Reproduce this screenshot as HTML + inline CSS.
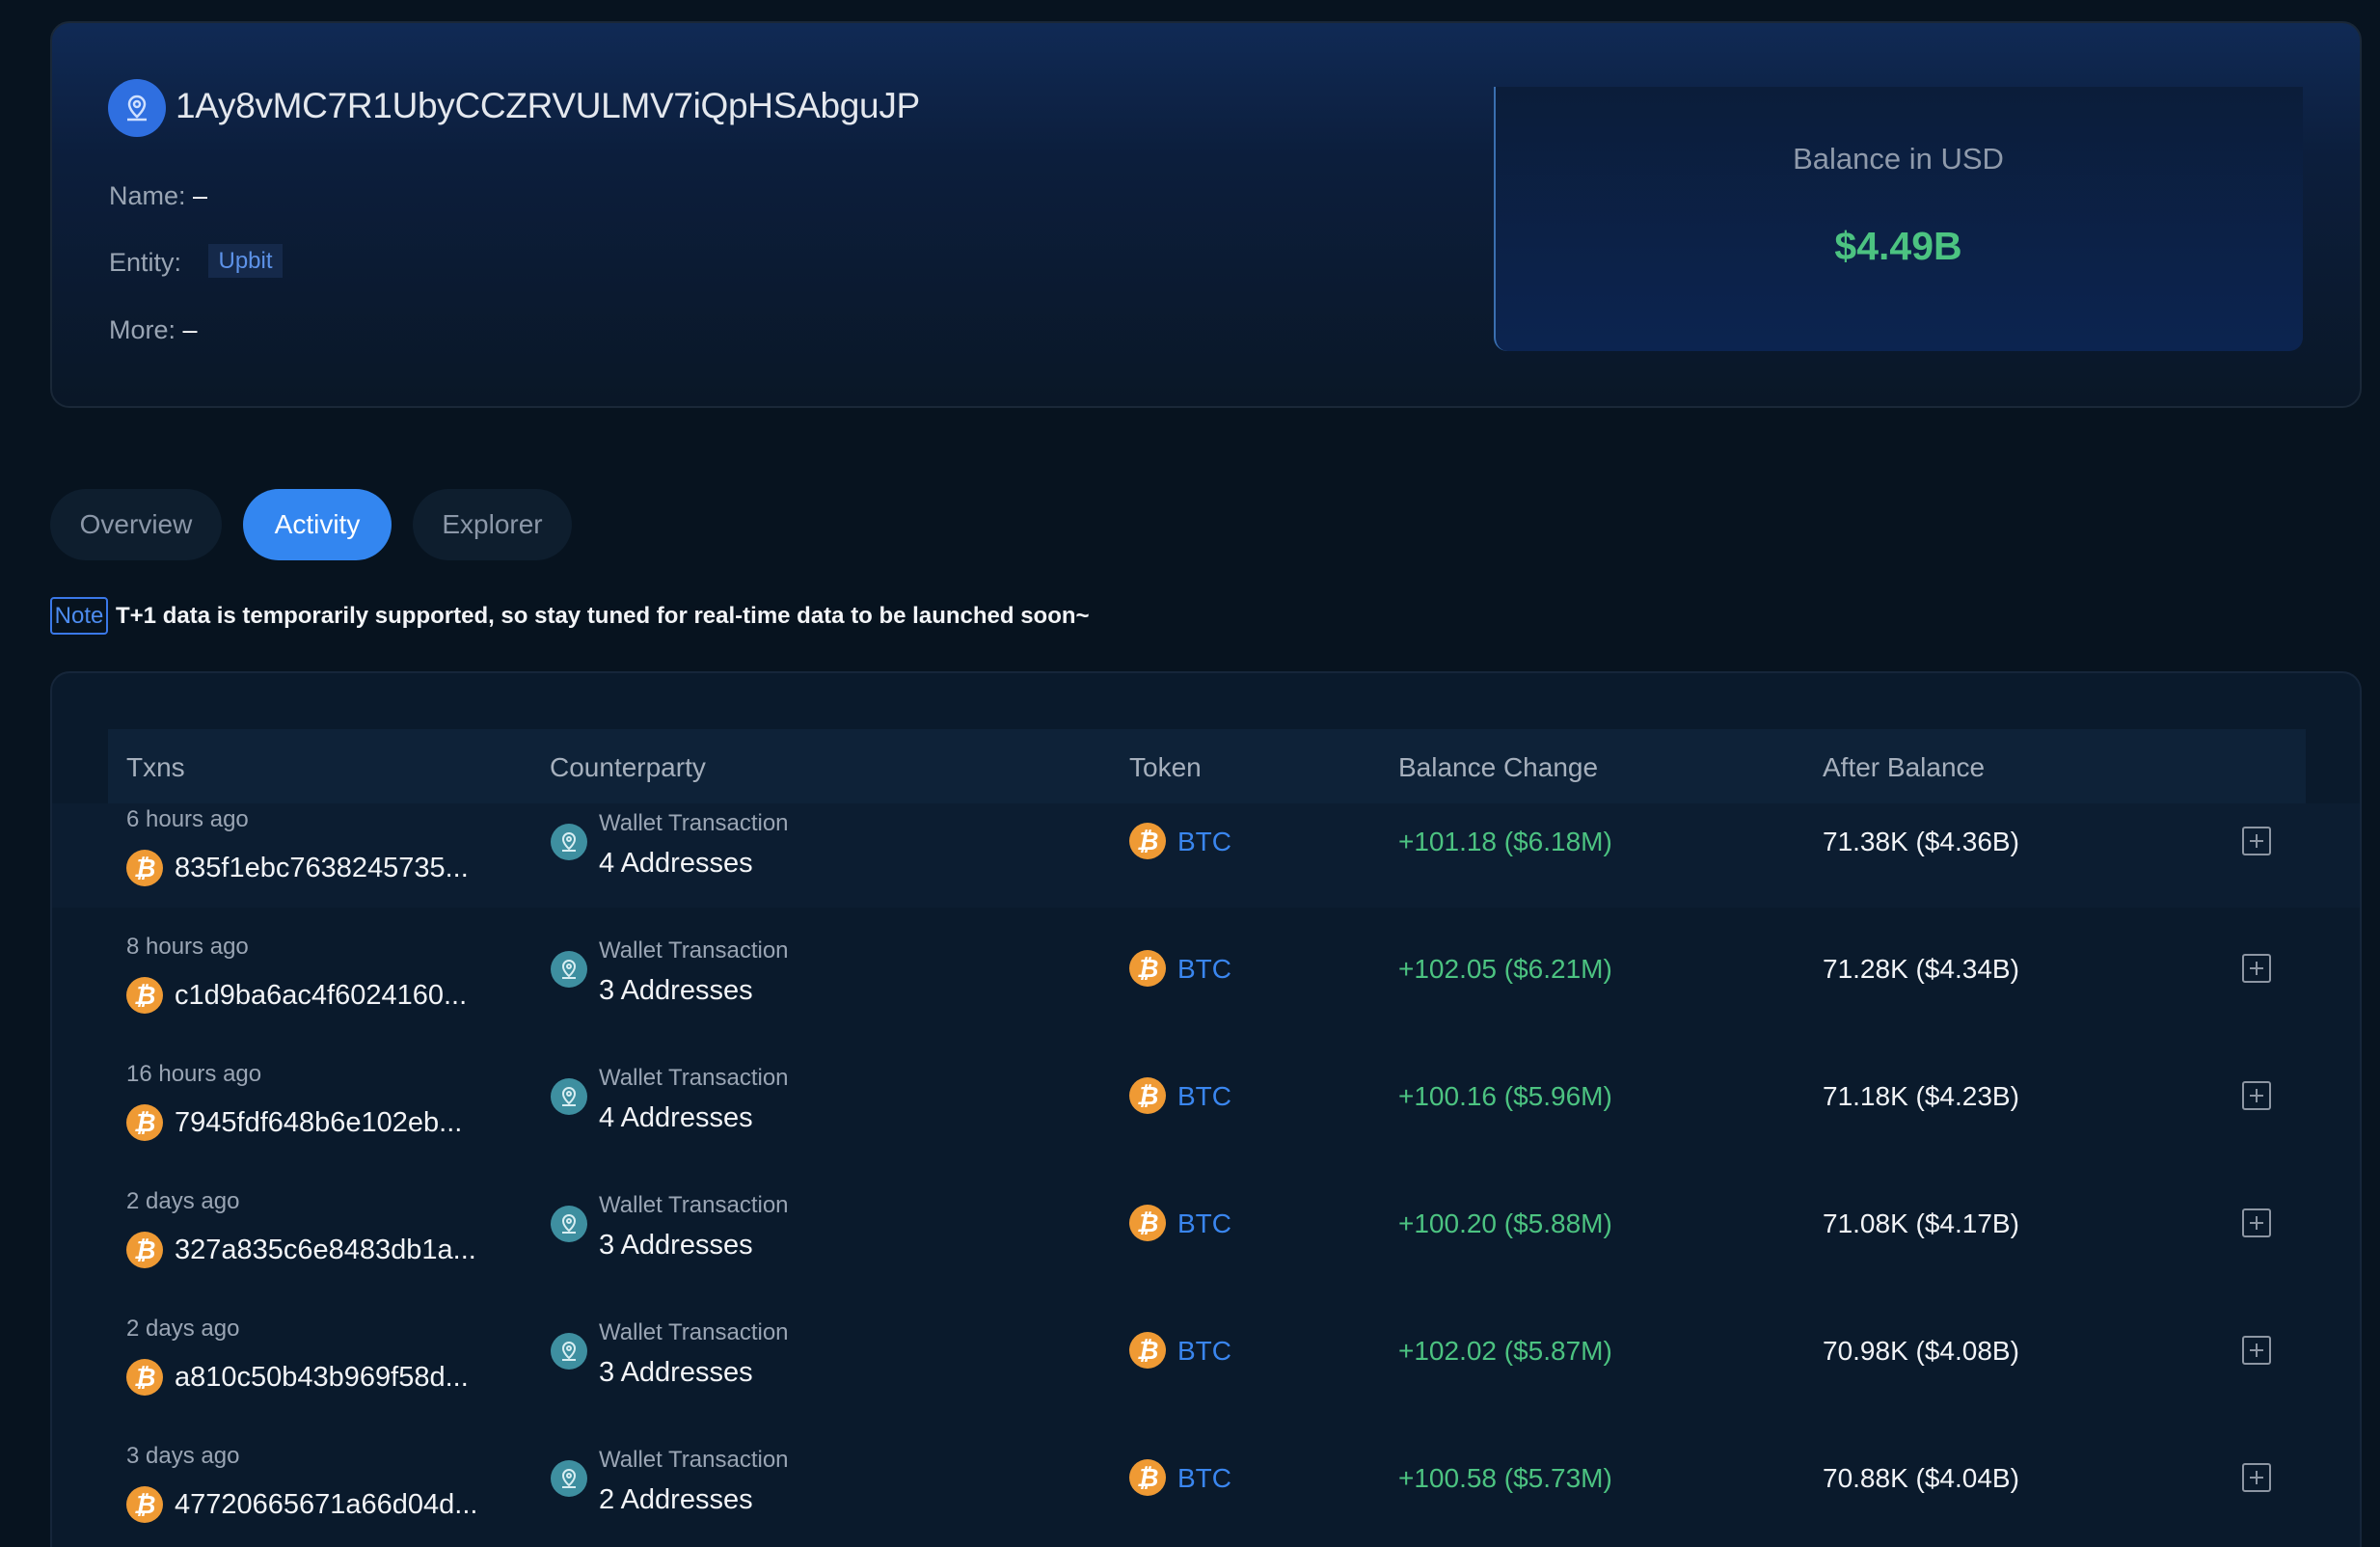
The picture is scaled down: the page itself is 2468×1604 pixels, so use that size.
<!DOCTYPE html>
<html style="width:2468px;height:1604px;overflow:hidden"><head><meta charset="utf-8"><style>
*{margin:0;padding:0;box-sizing:border-box}
body{width:2468px;height:1604px;background:#07131f;font-family:"Liberation Sans",sans-serif;position:relative;overflow:hidden;color:#fff}
.abs{position:absolute}
.card1{left:52px;top:22px;width:2397px;height:401px;border-radius:20px;border:2px solid #1a2838;background:linear-gradient(180deg,#102a55 0%,#0c1e3c 35%,#0a1727 100%)}
.bal{left:1549px;top:90px;width:839px;height:274px;border-radius:0 0 14px 14px;background:linear-gradient(180deg,#0b1d3a 0%,#0c2450 100%);border-left:2px solid #3a6fb0}
.lbl{font-size:27px;color:#9aa5b4}
.tab{top:507px;height:74px;border-radius:37px;font-size:28px;line-height:74px;text-align:center;color:#8b97a8;background:#0e1e2e}
.card2{left:52px;top:696px;width:2397px;height:908px;border-radius:20px 20px 0 0;border:2px solid #16263a;border-bottom:none;background:#0a1a2c}
.hdr{left:112px;top:756px;width:2279px;height:77px;background:#0e2238}
.hdr span{position:absolute;top:24px;font-size:28px;color:#a6b0bd}
.btc{position:absolute;width:38px;height:38px;border-radius:50%;background:#ef9a34;color:#fff;font-size:26px;font-weight:bold;text-align:center;line-height:38px;font-style:italic}
.cp{position:absolute;width:38px;height:38px;border-radius:50%;background:#3e8fa0}
.plus{position:absolute;width:30px;height:30px;border:2px solid #8d96a3;border-radius:3px}
.plus:before{content:"";position:absolute;left:6px;top:12px;width:14px;height:2px;background:#8d96a3}
.plus:after{content:"";position:absolute;left:12px;top:6px;width:2px;height:14px;background:#8d96a3}
</style></head><body>
<div class="abs card1"></div>
<div class="abs" style="left:112px;top:82px;width:60px;height:60px;border-radius:50%;background:#2f6fe0">
<svg width="60" height="60" viewBox="0 0 60 60"><path d="M30 18a8 8 0 0 1 8 8c0 6-8 13-8 13s-8-7-8-13a8 8 0 0 1 8-8z" fill="none" stroke="#cfe0ff" stroke-width="2.5"/><circle cx="30" cy="26" r="3" fill="none" stroke="#cfe0ff" stroke-width="2.5"/><path d="M20 42h20" stroke="#cfe0ff" stroke-width="2.5"/></svg></div>
<div class="abs" style="left:182px;top:89px;font-size:37px;color:#e4e8ee;letter-spacing:-0.3px">1Ay8vMC7R1UbyCCZRVULMV7iQpHSAbguJP</div>
<div class="abs lbl" style="left:113px;top:188px">Name: <span style="color:#fff">–</span></div>
<div class="abs lbl" style="left:113px;top:257px">Entity:</div>
<div class="abs" style="left:216px;top:253px;width:77px;height:35px;background:#15294a;color:#5d92e8;font-size:24px;line-height:35px;text-align:center">Upbit</div>
<div class="abs lbl" style="left:113px;top:327px">More: <span style="color:#fff">–</span></div>
<div class="abs bal"></div>
<div class="abs" style="left:1549px;top:147px;width:839px;text-align:center;font-size:31px;color:#8f9aab">Balance in USD</div>
<div class="abs" style="left:1549px;top:232px;width:839px;text-align:center;font-size:41px;font-weight:bold;color:#4cc381">$4.49B</div>
<div class="abs tab" style="left:52px;width:178px">Overview</div>
<div class="abs tab" style="left:252px;width:154px;background:#3386f0;color:#fff">Activity</div>
<div class="abs tab" style="left:428px;width:165px">Explorer</div>
<div class="abs" style="left:52px;top:619px;width:60px;height:39px;border:2px solid #3a78e8;border-radius:4px;color:#4d8cf0;font-size:24px;line-height:35px;text-align:center">Note</div>
<div class="abs" style="left:120px;top:625px;font-size:24px;font-weight:bold;color:#f2f4f7">T+1 data is temporarily supported, so stay tuned for real-time data to be launched soon~</div>
<div class="abs card2"></div>
<div class="abs hdr"><span style="left:19px">Txns</span><span style="left:458px">Counterparty</span><span style="left:1059px">Token</span><span style="left:1338px">Balance Change</span><span style="left:1778px">After Balance</span></div>
<div class="abs" style="left:54px;top:833px;width:2393px;height:108px;background:#0c1d31"></div>
<div id="rows"></div>
<script>
const d=[["6 hours ago","835f1ebc7638245735...","4","+101.18 ($6.18M)","71.38K ($4.36B)"],
["8 hours ago","c1d9ba6ac4f6024160...","3","+102.05 ($6.21M)","71.28K ($4.34B)"],
["16 hours ago","7945fdf648b6e102eb...","4","+100.16 ($5.96M)","71.18K ($4.23B)"],
["2 days ago","327a835c6e8483db1a...","3","+100.20 ($5.88M)","71.08K ($4.17B)"],
["2 days ago","a810c50b43b969f58d...","3","+102.02 ($5.87M)","70.98K ($4.08B)"],
["3 days ago","47720665671a66d04d...","2","+100.58 ($5.73M)","70.88K ($4.04B)"]];
let h="";d.forEach((r,i)=>{const o=i*132;
h+=`<div class="abs" style="left:131px;top:${836+o}px;font-size:24px;color:#9aa5b4">${r[0]}</div>
<div class="btc" style="left:131px;top:${881+o}px">₿</div>
<div class="abs" style="left:181px;top:${884+o}px;font-size:29px;color:#f2f4f7">${r[1]}</div>
<div class="cp" style="left:571px;top:${854+o}px"><svg width="38" height="38" viewBox="0 0 38 38"><path d="M19 10a6 6 0 0 1 6 6c0 5-6 10-6 10s-6-5-6-10a6 6 0 0 1 6-6z" fill="none" stroke="#d8eef2" stroke-width="2"/><circle cx="19" cy="16" r="2" fill="none" stroke="#d8eef2" stroke-width="2"/><path d="M12 28h14" stroke="#d8eef2" stroke-width="2"/></svg></div>
<div class="abs" style="left:621px;top:${840+o}px;font-size:24px;color:#9aa5b4">Wallet Transaction</div>
<div class="abs" style="left:621px;top:${879+o}px;font-size:29px;color:#f2f4f7">${r[2]} Addresses</div>
<div class="btc" style="left:1171px;top:${853+o}px">₿</div>
<div class="abs" style="left:1221px;top:${857+o}px;font-size:28px;color:#3a86ef">BTC</div>
<div class="abs" style="left:1450px;top:${857+o}px;font-size:28px;color:#4cc381">${r[3]}</div>
<div class="abs" style="left:1890px;top:${857+o}px;font-size:28px;color:#f2f4f7">${r[4]}</div>
<div class="plus" style="left:2325px;top:${857+o}px"></div>`});
document.getElementById("rows").innerHTML=h;
</script>
</body></html>
